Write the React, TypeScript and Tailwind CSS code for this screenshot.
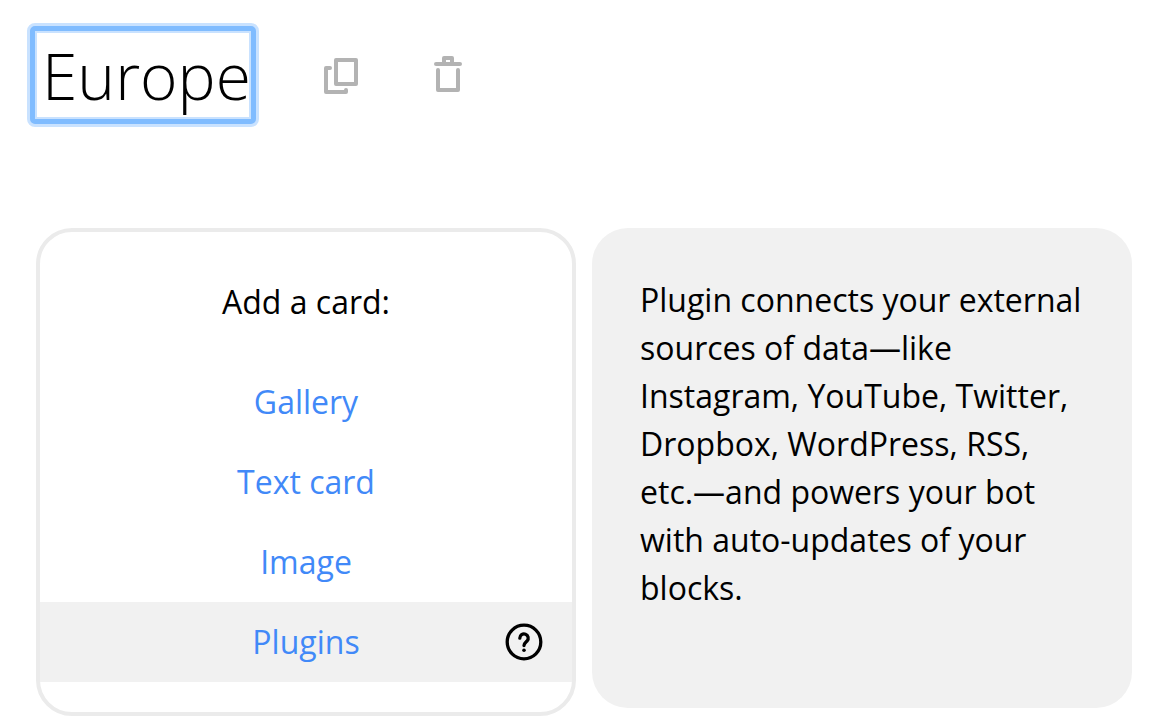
import React from "react";

const links = ["Gallery", "Text card", "Image"];

export default function App() {
  return (
    <main className="h-[726px] w-[1152px] overflow-hidden bg-white font-['Open_Sans',sans-serif] text-black">
      <header className="flex h-[228px] items-start pl-[27px] pt-[23px]">
        <div className="h-[104px] w-[232px] shrink-0 rounded-[8px] border-[3px] border-[#c9e2ff] bg-[#c9e2ff]">
          <div className="h-full w-full rounded-[5px] border-[5px] border-[#80bcff] bg-white">
            <div className="h-full w-full whitespace-nowrap border-2 border-[#c9e2ff] pl-[5px] pt-[11px] text-[64px] font-light leading-[64px]">
              Europe
            </div>
          </div>
        </div>
        <button aria-label="Duplicate" className="ml-[63px] mt-[33px]">
          <svg width="38" height="40" viewBox="0 0 38 40" fill="none" stroke="#b3b3b3" strokeWidth="4" strokeLinecap="round" strokeLinejoin="round">
            <path d="M14 4h20v24H14zM8 12H4v24h20v-2" />
          </svg>
        </button>
        <button aria-label="Delete" className="ml-[72px] mt-[33px]">
          <svg width="32" height="40" viewBox="0 0 32 40" fill="none" stroke="#b3b3b3" strokeWidth="4" strokeLinecap="round" strokeLinejoin="round">
            <path d="M4 8h24M12 8V2h8v6M6 14v20h20V14" />
          </svg>
        </button>
      </header>
      <div className="flex items-start gap-4 pl-9">
        <section className="h-[488px] w-[540px] rounded-[36px] border-4 border-[#ebebeb] text-center text-[32px]">
          <h2 className="mt-[46px] h-12 leading-[48px]">Add a card:</h2>
          <nav className="mt-9">
            {links.map((label) => (
              <a key={label} className="block h-20 leading-[80px] text-[#4189f8]">{label}</a>
            ))}
            <a className="relative block h-20 bg-[#f1f1f1] leading-[80px] text-[#4189f8]">
              Plugins
              <svg className="absolute right-[28px] top-[20px]" width="40" height="40" viewBox="0 0 40 40" fill="none" stroke="black" strokeWidth="3.3" strokeLinecap="round" strokeLinejoin="round">
                <circle cx="20" cy="20" r="16.8" />
                <path d="M15.800 16.200a4.200 4.200 0 1 1 7.300 2.800c-1.500 1.500-3.100 2.500-3.100 4.500" />
                <circle cx="20" cy="28.200" r="1.800" fill="black" stroke="none" />
              </svg>
            </a>
          </nav>
        </section>
        <aside className="h-[480px] w-[540px] rounded-[36px] bg-[#f1f1f1] px-12 pt-12 text-[32px] leading-[48px]">
          <p>
            Plugin connects your external<br />sources of data—like<br />Instagram, YouTube, Twitter,<br />Dropbox, WordPress, RSS,<br />etc.—and powers your bot<br />with auto-updates of your<br />blocks.
          </p>
        </aside>
      </div>
    </main>
  );
}
